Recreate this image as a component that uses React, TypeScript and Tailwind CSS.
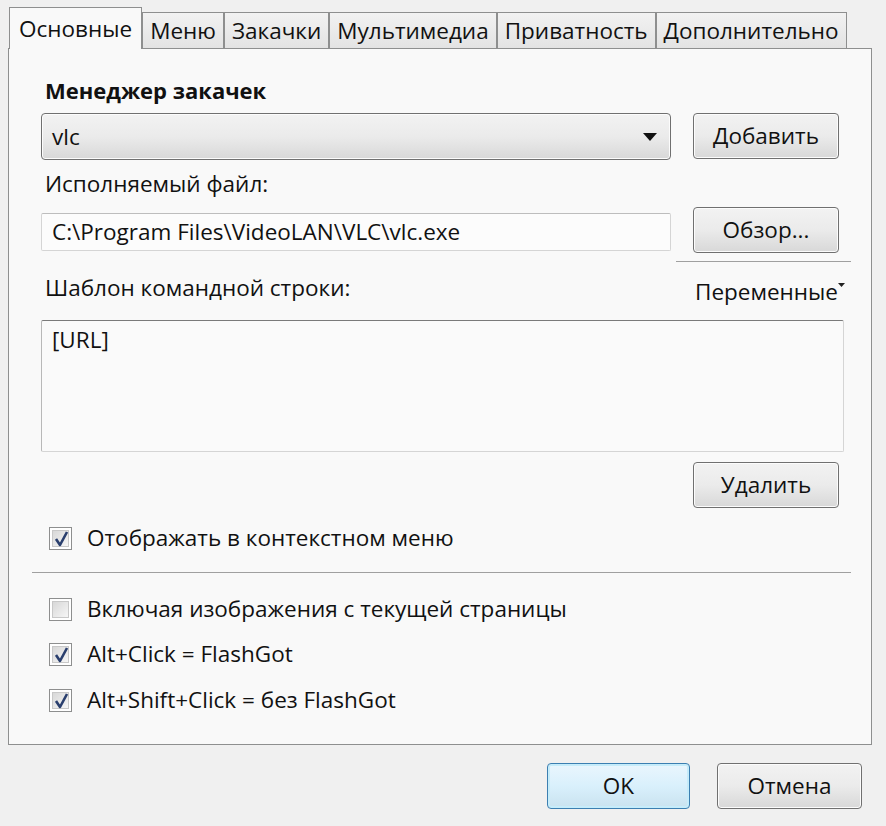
import { ReactNode } from 'react';

const font = { fontFamily: '"Open Sans", "Noto Sans", sans-serif' };

function Tab({ label, active = false }: { label: string; active?: boolean }) {
  if (active) {
    return (
      <div className="relative z-10 -mb-px flex h-[42px] items-center border border-b-0 border-[#8e8f8f] bg-[#f9f9f9] px-[9px] text-[22.5px] text-[#111]">
        {label}
      </div>
    );
  }
  return (
    <div className="flex h-[36px] items-center border border-b-0 border-[#8e8f8f] bg-gradient-to-b from-[#f2f2f2] to-[#e3e3e3] px-[7px] text-[22.5px] text-[#111]">
      {label}
    </div>
  );
}

function Button({
  children,
  className = '',
  primary = false,
}: {
  children: ReactNode;
  className?: string;
  primary?: boolean;
}) {
  return (
    <div
      className={`flex h-[46px] items-center justify-center rounded-[4px] border text-[22.5px] text-[#111] ${
        primary
          ? 'border-[#3c7fb1] bg-gradient-to-b from-[#eaf6fd] via-[#d9f0fc] to-[#c9e2ef] shadow-[inset_0_0_0_2px_#c6ecfa]'
          : 'border-[#707070] bg-gradient-to-b from-[#f2f2f2] via-[#ebebeb] to-[#d8d8d8] shadow-[inset_0_0_0_1px_#fcfcfc]'
      } ${className}`}
    >
      {children}
    </div>
  );
}

function Checkbox({ checked, label }: { checked: boolean; label: string }) {
  return (
    <div className="flex h-[28px] items-center">
      <div className="ml-[8px] flex h-[23px] w-[23px] items-center justify-center border border-[#8e8f8f] bg-white p-[2px]">
        <div className="relative h-full w-full border border-[#c8c8c8] bg-gradient-to-br from-[#d8d8d8] to-[#f6f6f6]">
          {checked && (
            <svg className="absolute left-[1px] top-[0px]" width="15" height="16" viewBox="0 0 15 16">
              <path d="M2 8 L6 14 L13 1" fill="none" stroke="#2a3f6e" strokeWidth="2.6" strokeLinejoin="round" />
            </svg>
          )}
        </div>
      </div>
      <span className="ml-[15px] text-[22.5px] text-[#111]">{label}</span>
    </div>
  );
}

export default function App() {
  return (
    <div className="h-[826px] w-[886px] overflow-hidden bg-[#f0f0f0]" style={font}>
      <div className="flex items-end pl-[9px] pt-[7px]">
        <Tab label="Основные" active />
        <Tab label="Меню" />
        <Tab label="Закачки" />
        <Tab label="Мультимедиа" />
        <Tab label="Приватность" />
        <Tab label="Дополнительно" />
      </div>

      <div className="ml-[8px] flex h-[697px] w-[864px] flex-col border border-[#8e8f8f] bg-[#f9f9f9] pl-[32px]">
        <div className="mt-[27px] h-[28px] pl-[4px] text-[22px] font-bold leading-[28px] text-[#111]">
          Менеджер закачек
        </div>

        <div className="mt-[9px] flex h-[47px]">
          <div className="flex h-[47px] w-[630px] items-center justify-between rounded-[4px] border border-[#707070] bg-gradient-to-b from-[#f2f2f2] via-[#ebebeb] to-[#d8d8d8] pl-[10px] pr-[12px] text-[22.5px] text-[#111] shadow-[inset_0_0_0_1px_#fcfcfc]">
            <span>vlc</span>
            <svg width="16" height="10" viewBox="0 0 16 10">
              <path d="M1 1 H15 L8 9 Z" fill="#111" />
            </svg>
          </div>
          <Button className="ml-[22px] w-[146px]">Добавить</Button>
        </div>

        <div className="mt-[10px] h-[28px] pl-[4px] text-[22.5px] leading-[28px] text-[#111]">
          Исполняемый файл:
        </div>

        <div className="mt-[9px] flex h-[46px] items-center">
          <div className="mt-[4px] flex h-[38px] w-[630px] items-center rounded-[2px] border border-[#d5d5d5] border-t-[#bdbdbd] bg-[#fcfcfc] pl-[10px] text-[22.5px] text-[#111]">
            C:\Program Files\VideoLAN\VLC\vlc.exe
          </div>
          <Button className="ml-[22px] w-[146px]">Обзор...</Button>
        </div>

        <div className="ml-[635px] mt-[8px] h-px w-[175px] bg-[#a0a0a0]" />

        <div className="mt-[12px] flex h-[28px] items-center justify-between pr-[26px] text-[22.5px] text-[#111]">
          <span className="pl-[4px]">Шаблон командной строки:</span>
          <span className="mt-[8px] flex items-start">
            Переменные
            <svg className="mt-[8px]" width="7" height="5" viewBox="0 0 7 5">
              <path d="M0 0 H7 L3.5 4 Z" fill="#222" />
            </svg>
          </span>
        </div>

        <div className="mt-[18px] h-[132px] w-[803px] rounded-[2px] border border-[#d5d5d5] border-t-[#7a7a7a] border-l-[#b8b8b8] bg-[#fafafa] px-[10px] pt-[2px] text-[22.5px] text-[#111]">
          [URL]
        </div>

        <div className="mt-[10px] flex">
          <Button className="ml-[652px] w-[146px]">Удалить</Button>
        </div>

        <div className="mt-[16px]">
          <Checkbox checked label="Отображать в контекстном меню" />
        </div>

        <div className="-ml-[9px] mt-[20px] h-px w-[819px] bg-[#a0a0a0]" />

        <div className="mt-[22px]">
          <Checkbox checked={false} label="Включая изображения с текущей страницы" />
        </div>
        <div className="mt-[17px]">
          <Checkbox checked label="Alt+Click = FlashGot" />
        </div>
        <div className="mt-[18px]">
          <Checkbox checked label="Alt+Shift+Click = без FlashGot" />
        </div>
      </div>

      <div className="mt-[18px] flex">
        <Button primary className="ml-[547px] w-[143px]">
          OK
        </Button>
        <Button className="ml-[27px] w-[145px]">Отмена</Button>
      </div>
    </div>
  );
}
